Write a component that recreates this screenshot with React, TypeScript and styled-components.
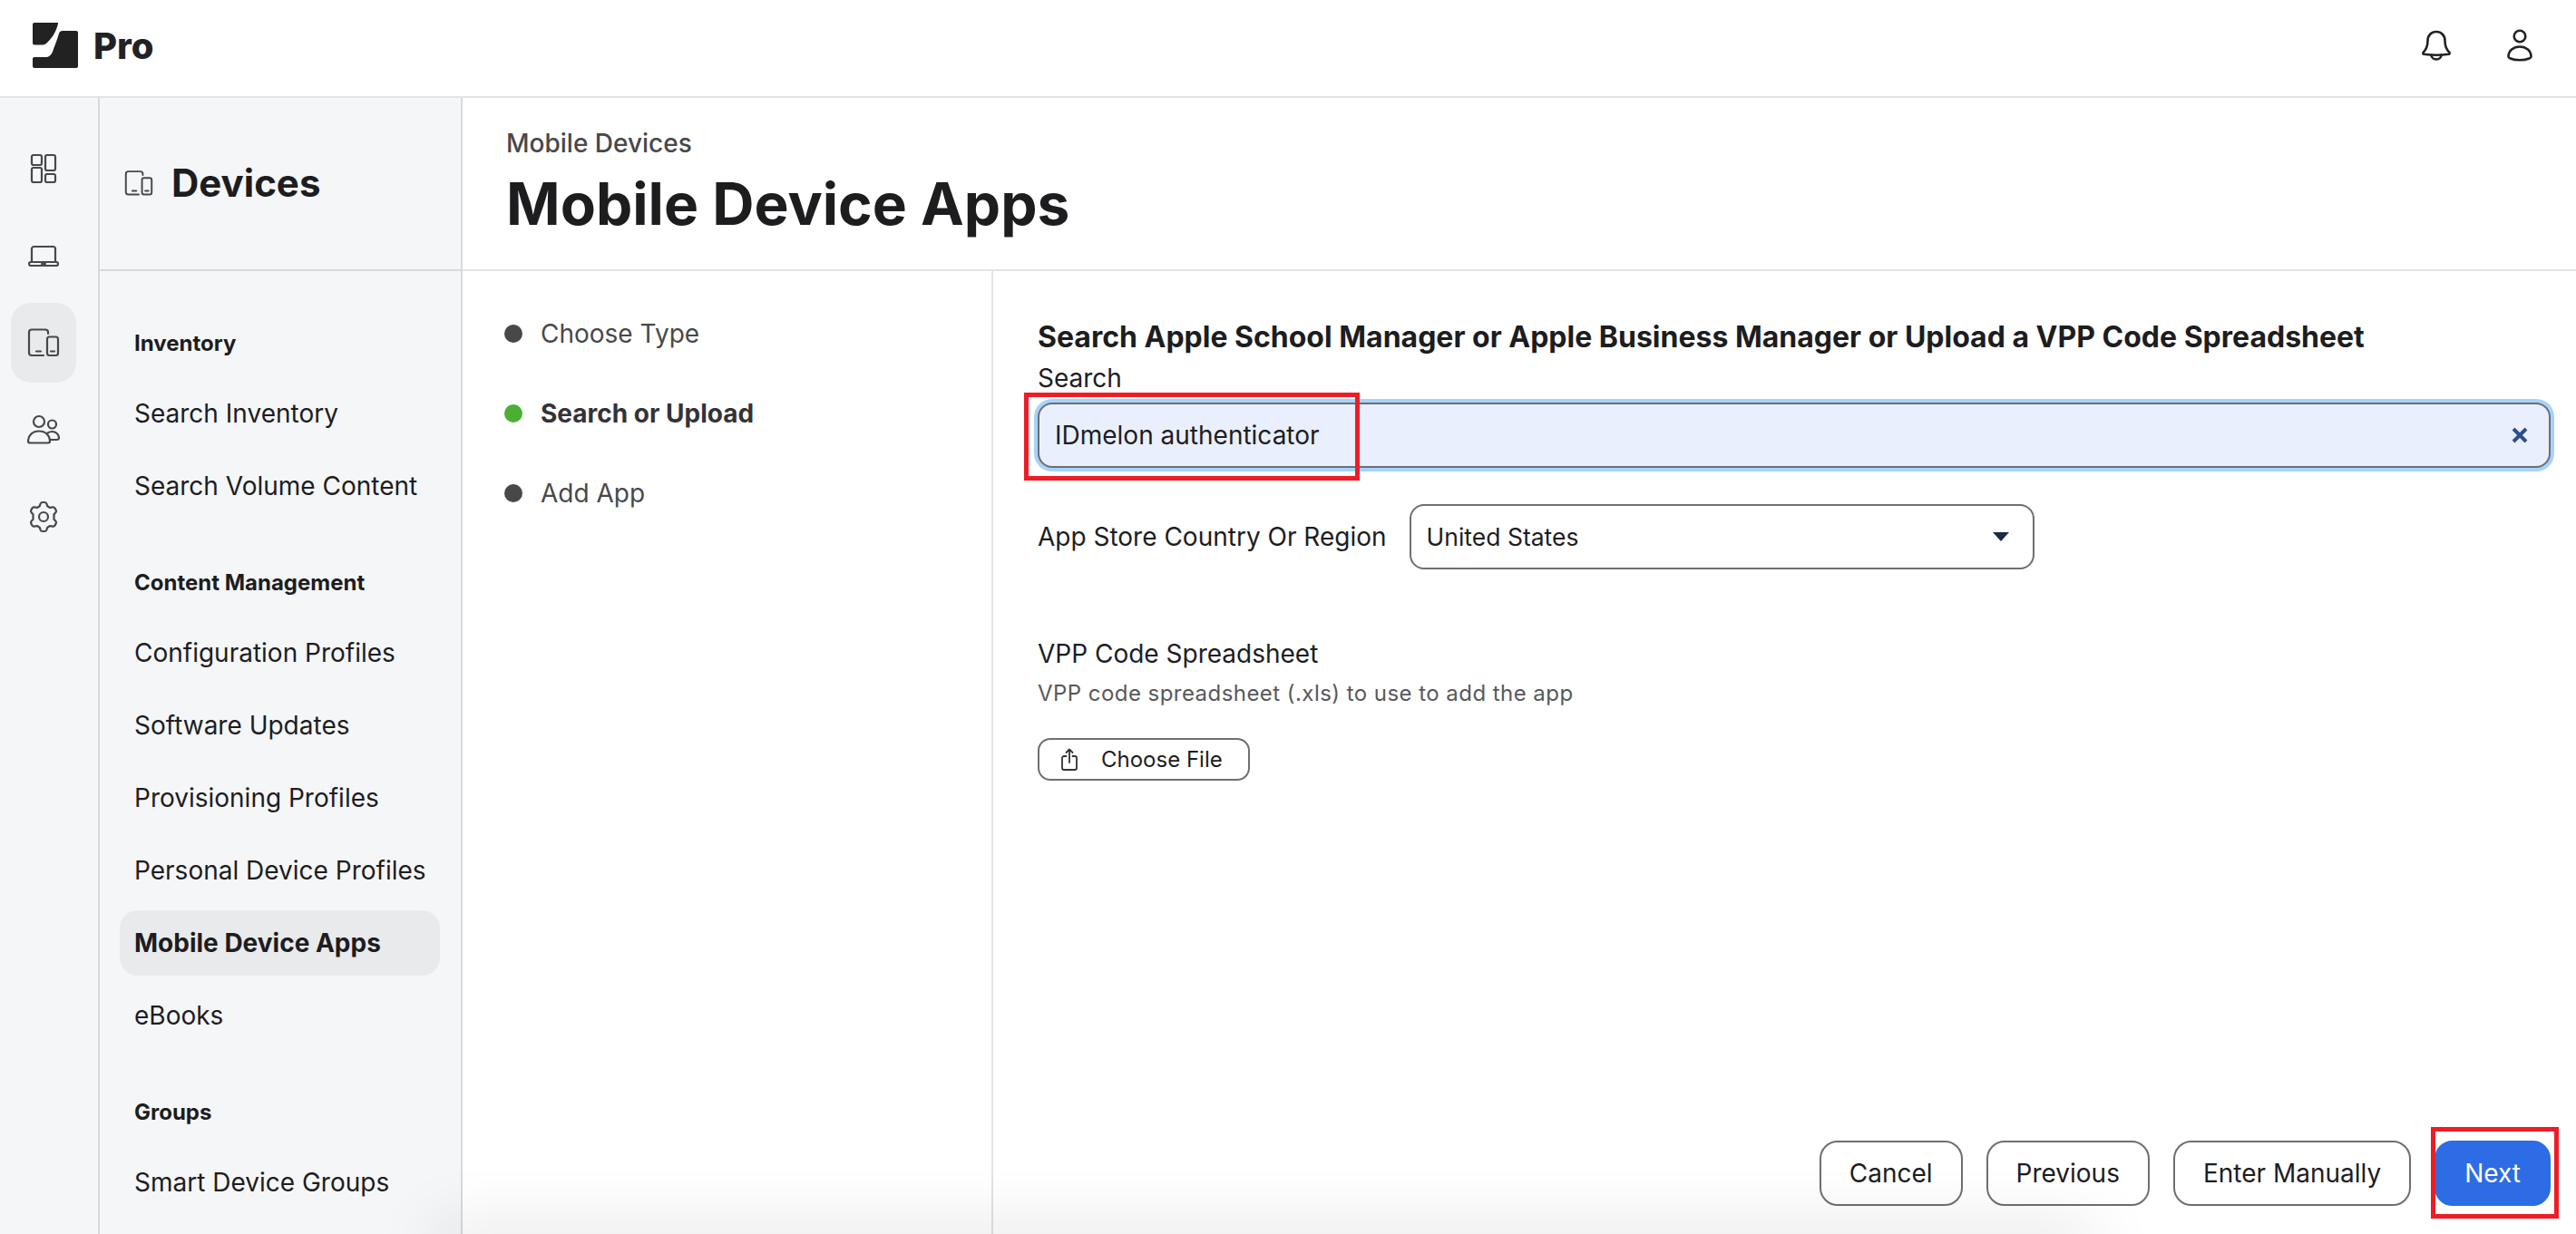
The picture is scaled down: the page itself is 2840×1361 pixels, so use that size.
import React from 'react'
import styled, { createGlobalStyle } from 'styled-components'

const GlobalStyle = createGlobalStyle`
  * { box-sizing: border-box; }
  html, body { margin: 0; padding: 0; height: 100%; overflow: hidden; background: #fff; }
  body { font-family: Inter, "Noto Sans", sans-serif; color: #1d1d1f; }
`

const Page = styled.div`
  position: relative;
  display: flex;
  flex-direction: column;
  width: 2840px;
  height: 1361px;
  overflow: hidden;
`

const TopBar = styled.header`
  flex: none;
  display: flex;
  align-items: center;
  justify-content: space-between;
  height: 108px;
  padding: 0 44px 6px 36px;
  border-bottom: 2px solid #e3e3e4;
`

const Brand = styled.div`
  display: flex;
  align-items: center;
  gap: 17px;
  font-size: 40px;
  font-weight: 800;
  color: #222;
`

const TopActions = styled.div`
  display: flex;
  align-items: center;
  gap: 56px;
  color: #222;
`

const Body = styled.div`
  flex: 1;
  display: flex;
  min-height: 0;
`

const Rail = styled.nav`
  flex: none;
  width: 110px;
  display: flex;
  flex-direction: column;
  gap: 8px;
  padding: 34px 12px 0 12px;
  background: #f5f6f8;
  border-right: 2px solid #d8d9dc;
`

const RailItem = styled.div<{ $active?: boolean }>`
  width: 72px;
  height: 88px;
  display: flex;
  align-items: center;
  justify-content: center;
  border-radius: 22px;
  color: #48484a;
  background: ${props => (props.$active ? '#e9eaec' : 'transparent')};
`

const Sidebar = styled.aside`
  flex: none;
  width: 400px;
  display: flex;
  flex-direction: column;
  background: #f5f6f8;
  border-right: 2px solid #d8d9dc;
`

const SidebarHead = styled.div`
  flex: none;
  height: 191px;
  display: flex;
  align-items: center;
  gap: 20px;
  padding: 0 0 2px 27px;
  border-bottom: 2px solid #d8d9dc;
  font-size: 42px;
  font-weight: 700;
  color: #1d1d1f;
  svg { color: #48484a; }
`

const SideNav = styled.div`
  display: flex;
  flex-direction: column;
  padding: 62px 23px 0 22px;
`

const SectionLabel = styled.div`
  height: 36px;
  line-height: 36px;
  padding-left: 16px;
  margin-bottom: 23px;
  font-size: 24px;
  font-weight: 700;
  color: #1d1d1f;
`

const SectionItems = styled.div`
  display: flex;
  flex-direction: column;
  gap: 8px;
  margin-bottom: 53px;
`

const NavItem = styled.div<{ $active?: boolean }>`
  height: 72px;
  line-height: 72px;
  padding-left: 16px;
  border-radius: 20px;
  white-space: nowrap;
  font-size: 28px;
  font-weight: ${props => (props.$active ? 700 : 400)};
  background: ${props => (props.$active ? '#e9eaec' : 'transparent')};
  color: #1d1d1f;
`

const Main = styled.main`
  flex: 1;
  display: flex;
  flex-direction: column;
  min-width: 0;
`

const PageHead = styled.div`
  flex: none;
  height: 191px;
  padding: 30px 0 0 48px;
  border-bottom: 2px solid #e3e3e4;
`

const Crumb = styled.div`
  font-size: 28px;
  line-height: 40px;
  font-weight: 500;
  color: #48484a;
`

const PageTitle = styled.h1`
  margin: 8px 0 0 0;
  font-size: 64px;
  line-height: 78px;
  font-weight: 700;
  color: #1d1d1f;
`

const Wizard = styled.div`
  flex: 1;
  display: flex;
  min-height: 0;
`

const Steps = styled.ol`
  flex: none;
  width: 585px;
  margin: 0;
  padding: 49px 0 0 46px;
  list-style: none;
  display: flex;
  flex-direction: column;
  gap: 48px;
  border-right: 2px solid #e3e3e4;
`

const Step = styled.li<{ $current?: boolean }>`
  display: flex;
  align-items: center;
  gap: 20px;
  height: 40px;
  font-size: 28px;
  font-weight: ${props => (props.$current ? 700 : 400)};
  color: ${props => (props.$current ? '#333336' : '#48484a')};
`

const StepDot = styled.span<{ $current?: boolean }>`
  width: 20px;
  height: 20px;
  border-radius: 50%;
  background: ${props => (props.$current ? '#4cae32' : '#48484a')};
`

const Content = styled.section`
  flex: 1;
  display: flex;
  flex-direction: column;
  min-width: 0;
  padding: 51px 28px 31px 49px;
`

const FormTitle = styled.h2`
  margin: 0;
  font-size: 32px;
  line-height: 44px;
  font-weight: 700;
  color: #1d1d1f;
`

const FieldLabel = styled.div`
  font-size: 28px;
  line-height: 40px;
  color: #1d1d1f;
`

const SearchLabel = styled(FieldLabel)`
  margin-top: 3px;
`

const SearchBox = styled.div`
  position: relative;
  display: flex;
  align-items: center;
  justify-content: space-between;
  height: 72px;
  margin-top: 7px;
  padding: 0 23px 0 17px;
  font-size: 28px;
  color: #1d1d1f;
  background: #e9effd;
  border: 2px solid #6e6e73;
  border-radius: 16px;
  box-shadow: 0 0 0 4px #a5d3fb;
  svg { color: #2d4f8c; }
`

const CountryRow = styled.div`
  display: flex;
  align-items: center;
  gap: 25px;
  margin-top: 40px;
`

const Select = styled.div`
  display: flex;
  align-items: center;
  justify-content: space-between;
  width: 689px;
  height: 72px;
  padding: 0 26px 0 17px;
  font-size: 26.5px;
  background: #fff;
  border: 2px solid #6e6e73;
  border-radius: 16px;
`

const Caret = styled.span`
  width: 0;
  height: 0;
  border-left: 9px solid transparent;
  border-right: 9px solid transparent;
  border-top: 10px solid #1d2a44;
`

const VppBlock = styled.div`
  margin-top: 73px;
`

const HelpText = styled.div`
  margin-top: 6px;
  font-size: 24px;
  line-height: 36px;
  letter-spacing: 0.45px;
  color: #58585c;
`

const FileButton = styled.button`
  display: flex;
  align-items: center;
  gap: 26px;
  width: 234px;
  height: 47px;
  margin-top: 31px;
  padding: 0 0 0 24px;
  font-family: inherit;
  font-size: 24px;
  color: #1d1d1f;
  background: #fff;
  border: 2px solid #6e6e73;
  border-radius: 14px;
`

const Footer = styled.div`
  margin-top: auto;
  display: flex;
  justify-content: flex-end;
  gap: 26px;
`

const ActionButton = styled.button<{ $primary?: boolean }>`
  height: 72px;
  min-width: 126px;
  padding: 0 31px;
  font-family: inherit;
  font-size: 28px;
  color: ${props => (props.$primary ? '#fff' : '#1d1d1f')};
  background: ${props => (props.$primary ? '#2d6ce4' : '#fff')};
  border: ${props => (props.$primary ? '2px solid #2d6ce4' : '2px solid #6e6e73')};
  border-radius: 20px;
`

const Highlight = styled.div<{ $x: number; $y: number; $w: number; $h: number }>`
  position: absolute;
  left: ${props => props.$x}px;
  top: ${props => props.$y}px;
  width: ${props => props.$w}px;
  height: ${props => props.$h}px;
  border: 5px solid #ee1c25;
  pointer-events: none;
`

// soft shadow rising from under the bottom edge of the window
const BottomFade = styled.div`
  position: absolute;
  left: 480px;
  width: 1830px;
  top: 1361px;
  height: 20px;
  pointer-events: none;
  box-shadow: 0 0 70px 0 rgba(0, 0, 0, 0.22);
`

const Logo = () => (
  <svg width="50" height="50" viewBox="0 0 50 50" fill="#222">
    <path d="M2 0H27.5C28 0 28 .5 28 1C26 9 23 15 16 22C14.5 24 12 24.5 9 24.5H2C.8 24.5 0 23.7 0 22.5V2C0 .8 .8 0 2 0Z" />
    <path d="M33 9H48C49.2 9 50 9.8 50 11V48C50 49.2 49.2 50 48 50H2C.8 50 0 49.2 0 48V40C0 38.8 .8 38 2 38H14C18 38 20 36 22 32C24 26 27 19 29 12C29.5 10 31 9 33 9Z" />
  </svg>
)

const Icon: React.FC<{ size?: number; weight?: number; children: React.ReactNode }> = ({
  size = 36,
  weight = 2.2,
  children,
}) => (
  <svg
    width={size}
    height={size}
    viewBox="0 0 36 36"
    fill="none"
    stroke="currentColor"
    strokeWidth={weight}
    strokeLinecap="round"
    strokeLinejoin="round"
  >
    {children}
  </svg>
)

const DashboardIcon = () => (
  <Icon>
    <rect x="5" y="3" width="11" height="11" rx="2" />
    <rect x="20" y="3" width="11" height="17" rx="2" />
    <rect x="5" y="17" width="11" height="16" rx="2" />
    <rect x="20" y="24" width="11" height="9" rx="2" />
  </Icon>
)

const LaptopIcon = () => (
  <Icon>
    <path d="M5 25V10.5C5 9 6 8 7.5 8H28.5C30 8 31 9 31 10.5V25" />
    <rect x="2" y="25" width="32" height="4" rx="2" />
    <path d="M16 27H20" />
  </Icon>
)

const DevicesIcon: React.FC<{ size?: number }> = ({ size }) => (
  <Icon size={size}>
    <path d="M23 8V6.5C23 4.5 22 3.5 20 3.5H5C3 3.5 2 4.500 2 6.500V29C2 31 3 32 5 32H18" />
    <path d="M10 27.5H15" />
    <rect x="22" y="11.500" width="12" height="20.500" rx="2.500" />
    <path d="M26 27.500H30" />
  </Icon>
)

const UsersIcon = () => (
  <Icon>
    <circle cx="13" cy="9" r="6" />
    <circle cx="27.5" cy="12" r="4.5" />
    <path d="M1 31C1 24 6 19.5 13 19.5C20 19.5 25 24 25 31C25 32 24.5 32.5 22 32.5H4C2 32.5 1 32 1 31Z" />
    <path d="M22.5 21.5C24 20.5 25.5 20 27.5 20C31.5 20 35 23 35 27C35 28.5 34 29 32.5 29H25" />
  </Icon>
)

const GearIcon = () => (
  <Icon>
    <path d="M14.6 3.6C15 2.6 15.8 2 17 2H19C20.2 2 21 2.6 21.4 3.6L22.3 6.3L25.2 8L28 7.4C29.1 7.2 30 7.6 30.6 8.6L31.6 10.4C32.2 11.4 32.1 12.4 31.4 13.2L29.5 15.3V20.7L31.4 22.8C32.1 23.6 32.2 24.6 31.6 25.6L30.6 27.4C30 28.4 29.1 28.8 28 28.6L25.2 28L22.3 29.7L21.4 32.4C21 33.4 20.2 34 19 34H17C15.8 34 15 33.4 14.6 32.4L13.7 29.7L10.8 28L8 28.6C6.9 28.8 6 28.4 5.4 27.4L4.4 25.6C3.8 24.6 3.9 23.6 4.6 22.8L6.5 20.7V15.3L4.6 13.2C3.9 12.4 3.8 11.4 4.4 10.4L5.4 8.6C6 7.6 6.9 7.2 8 7.4L10.8 8L13.7 6.3Z" />
    <circle cx="18" cy="18" r="5" />
  </Icon>
)

const BellIcon = () => (
  <Icon weight={2.6}>
    <path d="M8.500 13C8.500 7 12.500 3 18 3C23.500 3 27.500 7 27.500 13C27.500 20 29.500 23 32.500 26C33 27 32.500 27.500 31.500 27.700C23 29 13 29 4.500 27.700C3.500 27.500 3 27 3.500 26C6.500 23 8.500 20 8.500 13Z" />
    <path d="M12.500 28.500C12.500 31.500 15 33.500 18 33.500C21 33.500 23.500 31.500 23.500 28.500" />
  </Icon>
)

const UserIcon = () => (
  <Icon weight={2.6}>
    <circle cx="18" cy="8" r="6.300" />
    <path d="M5.500 30.500C5.500 24 11 19.500 18 19.500C25 19.500 30.500 24 30.500 30.500C30.500 31.200 30 31.700 29 32.200C25.500 33.700 22 34.300 18 34.300C14 34.300 10.500 33.700 7 32.200C6 31.700 5.500 31.200 5.500 30.500Z" />
  </Icon>
)

const ClearIcon = () => (
  <svg width="18" height="18" viewBox="0 0 18 18" stroke="currentColor" strokeWidth="4">
    <path d="M2 2L16 16M16 2L2 16" />
  </svg>
)

const ShareIcon = () => (
  <svg width="18" height="25" viewBox="0 0 18 25" fill="none" stroke="#333" strokeWidth="1.800" strokeLinecap="round" strokeLinejoin="round">
    <path d="M5.500 9H3C2 9 1 10 1 11V22C1 23 2 24 3 24H15C16 24 17 23 17 22V11C17 10 16 9 15 9H12.500" />
    <path d="M9 16V1.500M5.500 5L9 1.500L12.500 5" />
  </svg>
)

const navSections = [
  { label: 'Inventory', items: ['Search Inventory', 'Search Volume Content'] },
  {
    label: 'Content Management',
    items: [
      'Configuration Profiles',
      'Software Updates',
      'Provisioning Profiles',
      'Personal Device Profiles',
      'Mobile Device Apps',
      'eBooks',
    ],
  },
  { label: 'Groups', items: ['Smart Device Groups'] },
]

const steps = ['Choose Type', 'Search or Upload', 'Add App']

export default function App() {
  return (
    <Page>
      <GlobalStyle />
      <TopBar>
        <Brand>
          <Logo />
          Pro
        </Brand>
        <TopActions>
          <BellIcon />
          <UserIcon />
        </TopActions>
      </TopBar>
      <Body>
        <Rail>
          <RailItem><DashboardIcon /></RailItem>
          <RailItem><LaptopIcon /></RailItem>
          <RailItem $active><DevicesIcon /></RailItem>
          <RailItem><UsersIcon /></RailItem>
          <RailItem><GearIcon /></RailItem>
        </Rail>
        <Sidebar>
          <SidebarHead>
            <DevicesIcon size={32} />
            Devices
          </SidebarHead>
          <SideNav>
            {navSections.map(section => (
              <React.Fragment key={section.label}>
                <SectionLabel>{section.label}</SectionLabel>
                <SectionItems>
                  {section.items.map(item => (
                    <NavItem key={item} $active={item === 'Mobile Device Apps'}>{item}</NavItem>
                  ))}
                </SectionItems>
              </React.Fragment>
            ))}
          </SideNav>
        </Sidebar>
        <Main>
          <PageHead>
            <Crumb>Mobile Devices</Crumb>
            <PageTitle>Mobile Device Apps</PageTitle>
          </PageHead>
          <Wizard>
            <Steps>
              {steps.map(step => (
                <Step key={step} $current={step === 'Search or Upload'}>
                  <StepDot $current={step === 'Search or Upload'} />
                  {step}
                </Step>
              ))}
            </Steps>
            <Content>
              <FormTitle>Search Apple School Manager or Apple Business Manager or Upload a VPP Code Spreadsheet</FormTitle>
              <SearchLabel>Search</SearchLabel>
              <SearchBox>
                IDmelon authenticator
                <ClearIcon />
              </SearchBox>
              <CountryRow>
                <FieldLabel>App Store Country Or Region</FieldLabel>
                <Select>
                  United States
                  <Caret />
                </Select>
              </CountryRow>
              <VppBlock>
                <FieldLabel>VPP Code Spreadsheet</FieldLabel>
                <HelpText>VPP code spreadsheet (.xls) to use to add the app</HelpText>
                <FileButton>
                  <ShareIcon />
                  Choose File
                </FileButton>
              </VppBlock>
              <Footer>
                <ActionButton>Cancel</ActionButton>
                <ActionButton>Previous</ActionButton>
                <ActionButton>Enter Manually</ActionButton>
                <ActionButton $primary>Next</ActionButton>
              </Footer>
            </Content>
          </Wizard>
        </Main>
      </Body>
      <BottomFade />
      <Highlight $x={1129} $y={433} $w={370} $h={97} />
      <Highlight $x={2680} $y={1243} $w={141} $h={101} />
    </Page>
  )
}
